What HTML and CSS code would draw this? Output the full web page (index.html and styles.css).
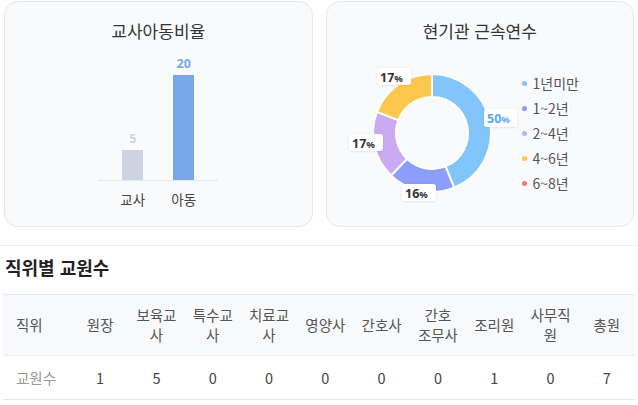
FILE: index.html
```html
<!DOCTYPE html>
<html lang="ko">
<head>
<meta charset="utf-8">
<link rel="stylesheet" href="styles.css">
</head>
<body>
<div class="cards">
  <section class="card">
    <h2 class="card-title">교사아동비율</h2>
    <div class="bar-chart">
      <div class="plot">
        <div class="bar-col">
          <span class="bar-value teacher">5</span>
          <div class="bar teacher" style="height:30px"></div>
        </div>
        <div class="bar-col">
          <span class="bar-value child">20</span>
          <div class="bar child" style="height:105px"></div>
        </div>
      </div>
      <div class="axis-labels">
        <span>교사</span>
        <span>아동</span>
      </div>
    </div>
  </section>
  <section class="card">
    <h2 class="card-title">현기관 근속연수</h2>
    <div class="donut-row">
      <svg class="donut" width="190" height="150" viewBox="0 0 190 150">
        <defs>
          <filter id="sh" x="-20%" y="-30%" width="140%" height="160%">
            <feDropShadow dx="0" dy="0.5" stdDeviation="0.8" flood-color="#000" flood-opacity="0.12"/>
          </filter>
        </defs>
        <g stroke="#fff" stroke-width="2" stroke-linejoin="round">
          <path fill="#82c5fc" d="M100,16 A59,59 0 0 1 122.10,129.70 L113.49,108.38 A36,36 0 0 0 100,39 Z"/>
          <path fill="#8c9dfb" d="M122.10,129.70 A59,59 0 0 1 59.01,117.44 L74.99,100.89 A36,36 0 0 0 113.49,108.38 Z"/>
          <path fill="#c9aaf3" d="M59.01,117.44 A59,59 0 0 1 44.92,53.85 L66.39,62.10 A36,36 0 0 0 74.99,100.89 Z"/>
          <path fill="#fdc64c" d="M44.92,53.85 A59,59 0 0 1 100,16 L100,39 A36,36 0 0 0 66.39,62.10 Z"/>
        </g>
        <g class="pct">
          <rect x="152" y="51" width="33" height="18" rx="3" fill="#fff" filter="url(#sh)"/>
          <text x="155" y="65" class="pct-blue">50<tspan class="pct-sign">%</tspan></text>
          <rect x="45" y="10" width="34" height="17" rx="3" fill="#fff" filter="url(#sh)"/>
          <text x="48" y="23.5">17<tspan class="pct-sign">%</tspan></text>
          <rect x="17" y="76" width="34" height="17" rx="3" fill="#fff" filter="url(#sh)"/>
          <text x="20" y="89.5">17<tspan class="pct-sign">%</tspan></text>
          <rect x="70" y="126" width="34" height="17" rx="3" fill="#fff" filter="url(#sh)"/>
          <text x="73" y="139.5">16<tspan class="pct-sign">%</tspan></text>
        </g>
      </svg>
      <ul class="legend">
        <li><i class="dot d1"></i>1년미만</li>
        <li><i class="dot d2"></i>1~2년</li>
        <li><i class="dot d3"></i>2~4년</li>
        <li><i class="dot d4"></i>4~6년</li>
        <li><i class="dot d5"></i>6~8년</li>
      </ul>
    </div>
  </section>
</div>

<section class="staff">
  <h3 class="staff-title">직위별 교원수</h3>
  <table class="staff-table">
    <colgroup>
      <col class="col-first">
      <col><col><col><col><col><col><col><col><col><col>
    </colgroup>
    <thead>
      <tr>
        <th class="first">직위</th>
        <th>원장</th>
        <th>보육교사</th>
        <th>특수교사</th>
        <th>치료교사</th>
        <th>영양사</th>
        <th>간호사</th>
        <th class="keep">간호 조무사</th>
        <th>조리원</th>
        <th>사무직원</th>
        <th>총원</th>
      </tr>
    </thead>
    <tbody>
      <tr>
        <td class="first">교원수</td>
        <td>1</td>
        <td>5</td>
        <td>0</td>
        <td>0</td>
        <td>0</td>
        <td>0</td>
        <td>0</td>
        <td>1</td>
        <td>0</td>
        <td>7</td>
      </tr>
    </tbody>
  </table>
</section>
</body>
</html>
```

FILE: styles.css
```css
* { box-sizing: border-box; }

html, body {
  margin: 0;
  padding: 0;
  background: #fff;
  font-family: "Noto Sans CJK KR", "Noto Sans", sans-serif;
  color: #333;
}

.cards {
  display: flex;
  gap: 13px;
  padding: 1px 4px 0 4px;
}

.card {
  flex: 1;
  height: 226px;
  background: #f9fafc;
  border: 1px solid #e6e8ec;
  border-radius: 14px;
  padding-top: 18px;
}

.card-title {
  margin: 0;
  font-size: 17px;
  line-height: 22px;
  font-weight: 400;
  text-align: center;
  color: #333;
}

/* bar chart */
.bar-chart {
  width: 120px;
  margin: 0 auto;
}

.plot {
  height: 139px;
  border-bottom: 1px solid #e3e6ea;
  display: flex;
  justify-content: center;
  align-items: flex-end;
}

.bar-col {
  width: 51px;
  display: flex;
  flex-direction: column;
  align-items: center;
}

.bar-value {
  font-family: "Noto Sans", sans-serif;
  font-size: 12.5px;
  font-weight: 700;
  line-height: 14px;
  margin-bottom: 4px;
}
.bar-value.teacher { color: #ced3df; }
.bar-value.child { color: #79a8ea; }

.bar { width: 21px; }
.bar.teacher { background: #cdd3e0; }
.bar.child { background: #78a8ea; }

.axis-labels {
  display: flex;
  justify-content: center;
  margin-top: 9px;
}
.axis-labels span {
  width: 51px;
  text-align: center;
  font-size: 13.5px;
  line-height: 18px;
  color: #444;
}

/* donut */
.donut-row {
  display: flex;
  align-items: center;
  margin-top: 16px;
  padding-left: 5px;
}

.donut { display: block; flex: none; }

.pct text {
  font-family: "Noto Sans", sans-serif;
  font-size: 12.5px;
  font-weight: 700;
  fill: #333;
}
.pct text.pct-blue { fill: #5ea9ee; }
.pct .pct-sign { font-size: 9.5px; font-weight: 700; }

.legend {
  list-style: none;
  margin: 0;
  padding: 0;
}
.legend li {
  display: flex;
  align-items: center;
  height: 25px;
  font-size: 14px;
  color: #555;
}
.dot {
  width: 5px;
  height: 5px;
  border-radius: 50%;
  margin-right: 6px;
  flex: none;
}
.d1 { background: #82c5fc; }
.d2 { background: #8c9dfb; }
.d3 { background: #c9aaf3; }
.d4 { background: #fdc64c; }
.d5 { background: #f87462; }

/* staff table */
.staff {
  margin-top: 18px;
  border-top: 1px solid #eeeff1;
  padding: 9px 3px 0 3px;
}

.staff-title {
  margin: 0 0 15px 2px;
  font-size: 18px;
  line-height: 24px;
  font-weight: 700;
  color: #222;
}

.staff-table {
  width: 632px;
  table-layout: fixed;
  border-collapse: collapse;
  font-size: 14.5px;
}
.col-first { width: 69px; }

.staff-table thead tr {
  background: #f8f9fb;
  border-top: 1px solid #e5e7eb;
  border-bottom: 1px solid #edeef1;
}
.staff-table th {
  font-weight: 400;
  color: #555;
  line-height: 20px;
  height: 61px;
  padding: 0 6px;
  text-align: center;
  vertical-align: middle;
}
.staff-table th.keep { word-break: keep-all; }
.staff-table tbody tr {
  border-bottom: 1px solid #e5e7eb;
}
.staff-table td {
  height: 44px;
  text-align: center;
  color: #444;
  padding: 0 6px;
}
.staff-table .first {
  text-align: left;
  padding-left: 13px;
}
.staff-table td.first { color: #999; }
```
